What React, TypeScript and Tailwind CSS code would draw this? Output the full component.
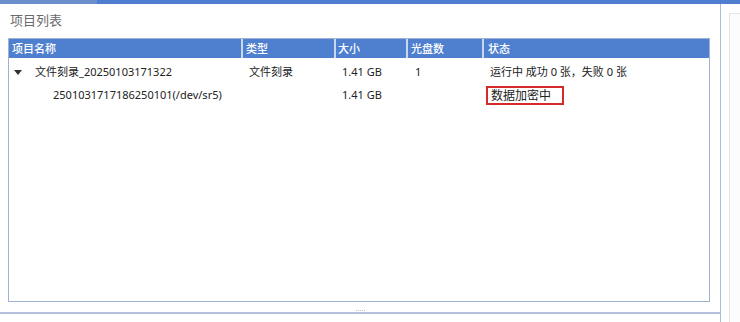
import React from "react";

const font = { fontFamily: '"Noto Sans", "Noto Sans CJK SC", sans-serif' };

export default function App() {
  return (
    <div className="w-[740px] h-[322px] bg-white overflow-hidden flex flex-col" style={font}>
      <div className="h-[4px] flex shrink-0">
        <div className="w-[97px] bg-[#6b8fcc]" />
        <div className="flex-1 bg-[#4f7ed0]" />
      </div>
      <div className="flex flex-1 min-h-0">
        <div className="w-[721px] flex flex-col border-r border-[#aabcdc]">
          <div className="h-[34px] pl-[10px] flex items-center text-[13px] text-[#6a6a6a]">项目列表</div>
          <div className="ml-[8px] w-[702px] h-[264px] border border-[#9fb2d6] flex flex-col">
            <div className="h-[19px] bg-[#4f7fcf] flex text-white text-[11px] font-medium leading-[19px]">
              <div className="w-[234px] pl-[3px] border-r-2 border-[#c9d8ef]">项目名称</div>
              <div className="w-[93px] pl-[3px] border-r-2 border-[#c9d8ef]">类型</div>
              <div className="w-[72px] pl-[2px] border-r-2 border-[#c9d8ef]">大小</div>
              <div className="w-[76px] pl-[3px] border-r-2 border-[#c9d8ef]">光盘数</div>
              <div className="flex-1 pl-[4px]">状态</div>
            </div>
            <div className="h-[3px]" />
            <div className="h-[23px] flex items-center text-[11px] text-[#222]">
              <div className="w-[234px] flex items-center">
                <svg width="8" height="6" viewBox="0 0 8 6" className="ml-[5px] mr-[13px]">
                  <path d="M0 0 L8 0 L4 5 Z" fill="#333" />
                </svg>
                <span>文件刻录_20250103171322</span>
              </div>
              <div className="w-[93px] pl-[6px]">文件刻录</div>
              <div className="w-[72px] pl-[6px]">1.41 GB</div>
              <div className="w-[76px] pl-[7px]">1</div>
              <div className="flex-1 pl-[6px]">运行中 成功 0 张，失败 0 张</div>
            </div>
            <div className="h-[23px] flex items-center text-[11px] text-[#222]">
              <div className="w-[234px] pl-[44px] whitespace-nowrap">2501031717186250101(/dev/sr5)</div>
              <div className="w-[93px]" />
              <div className="w-[72px] pl-[6px]">1.41 GB</div>
              <div className="w-[76px]" />
              <div className="flex-1 pl-[2px]">
                <div className="w-[78px] h-[19px] border-2 border-[#d42a2a] pl-[3px] text-[12px] leading-[15px]">数据加密中</div>
              </div>
            </div>
          </div>
          <div className="flex-1 flex flex-col justify-end">
            <div className="flex justify-center gap-[1px] mb-[1px]">
              <span className="w-[1px] h-[1px] bg-[#b8c4d8]" />
              <span className="w-[1px] h-[1px] bg-[#b8c4d8]" />
              <span className="w-[1px] h-[1px] bg-[#b8c4d8]" />
              <span className="w-[1px] h-[1px] bg-[#b8c4d8]" />
              <span className="w-[1px] h-[1px] bg-[#b8c4d8]" />
            </div>
            <div className="h-[2px] bg-[#b3c1da] mb-[8px]" />
          </div>
        </div>
        <div className="flex-1 pl-[8px] pt-[9px]">
          <div className="h-full border-l border-t border-[#e2e6ec] bg-[#fcfcfd]" />
        </div>
      </div>
    </div>
  );
}
